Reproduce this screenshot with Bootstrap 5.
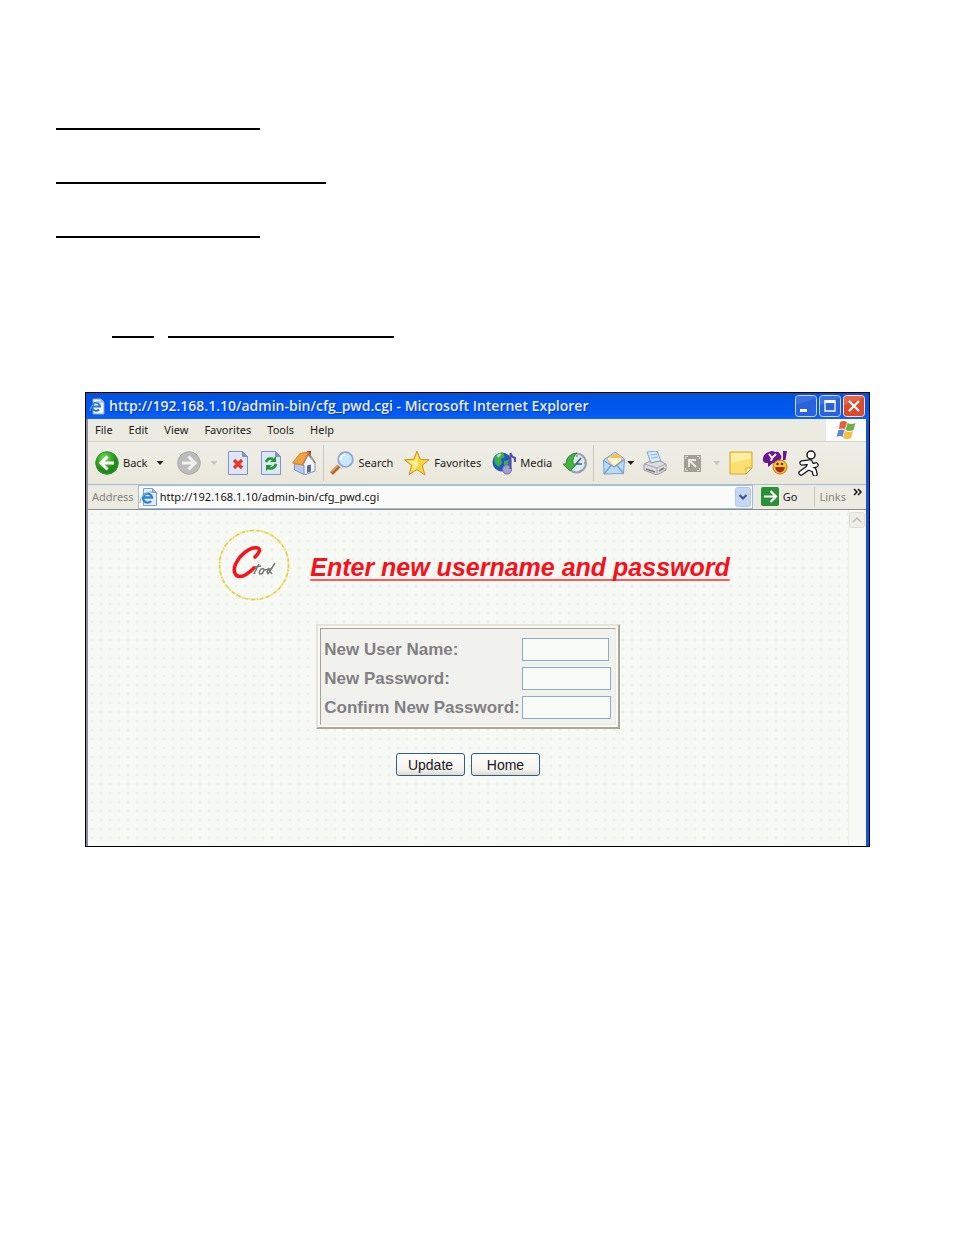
<!DOCTYPE html>
<html lang="en">
<head>
<meta charset="utf-8">
<meta name="viewport" content="width=device-width, initial-scale=1">
<title>cfg_pwd.cgi - Microsoft Internet Explorer</title>
<link href="https://cdn.jsdelivr.net/npm/bootstrap@5.3.0/dist/css/bootstrap.min.css" rel="stylesheet">
<style>
  body { background: #fff; color: #000; font-family: "Liberation Sans", Arial, sans-serif; }
  button { color: inherit; }
  svg { display: block; flex: none; }

  /* ruled lines above the window */
  .rules { padding: 128px 56px 0; }
  .rule { height: 2px; background: #000; border: 0; opacity: 1; margin: 0 0 52px; }
  .rule-a { width: 204px; }
  .rule-b { width: 270px; }
  .rule-row { padding: 46px 56px 54px 112px; gap: 14px; }
  .rule-c { width: 42px; margin: 0; }
  .rule-d { width: 226px; margin: 0; }

  .window { margin: 0 84px 0 85px; border: 1px solid #000; background: #0f50e0; }
  .titlebar { height: 26px; padding: 0 4px 0 3px; gap: 4px; color: #e6edff;
    background: linear-gradient(#0a4fd0, #0056e8 25%, #0058ee 75%, #0a62fa); }
  .caption { font: 600 14px/26px "Open Sans", "Noto Sans", sans-serif; margin: 0; text-shadow: 1px 1px 0 #0a3aa8; }
  .winbtns { gap: 2px; }
  .winbtns button { padding: 0; border: 0; background: none; }
  .chrome { background: #ecebe2; border-left: 2px solid #8a8c9e; margin-right: 3px;
    font: 11px/14px "Noto Sans", sans-serif; color: #1c1c1c; }
  .plain { border: 0; background: none; padding: 0; font: inherit; color: inherit; white-space: nowrap; }

  .menubar { height: 23px; border-bottom: 1px solid #d6d3c6; padding-left: 7px; }
  .menus { gap: 16px; }
  .flagbox { width: 40px; background: #fdfdfd; }

  .toolbar { height: 43px; border-bottom: 1px solid #a9bfd8; background: linear-gradient(#efeee7, #eae8db); }
  .tools { gap: 9px; padding: 0 7px; }
  .tools-wide { gap: 11px; padding: 0 6px; }
  .tools-end { padding-left: 8px; }
  .tool { gap: 4px; }
  .caret { width: 7px; height: 4px; background: #222; clip-path: polygon(0 0, 100% 0, 50% 100%); margin: 0 5px; }
  .caret-near { margin: 0 0 0 -3px; }
  .caret-off { background: #c9c7bd; margin: 0 0 0 5px; }
  .divider { width: 1px; height: 36px; background: #cac8bd; }

  .addressbar { height: 25px; border-bottom: 1px solid #8c8c88; padding: 0 3px 1px 4px; }
  .muted-label { color: #85837b; }
  .addr { height: 24px; border: 1px solid #a3bbd8; background: #fbfcfa; margin-left: 4px; padding: 0 1px 0 0; }
  .addr input { border: 0; background: none; padding: 0 0 0 3px; min-width: 0; font: inherit; color: #111; outline: 0; }
  .links { border-left: 1px solid #cac8bd; margin-left: 17px; padding-left: 4px; height: 20px; gap: 7px; }

  .page { background: #f7f9f4; border-left: 2px solid #8a8c9e; margin-right: 3px; min-height: 336px; }
  .dots { background: radial-gradient(circle at 4px 4px, #eff1ec 1px, transparent 2px) 0 0 / 9px 9px; }
  .scroll { width: 18px; border-left: 1px solid #eff0ea; padding-top: 2px; }
  .heading { gap: 20px; padding: 19px 0 0 12px; }
  .heading h1 { font: italic bold 25px/30px "Liberation Sans", Arial, sans-serif; color: #f8101a; margin: 0; padding-top: 4px;
    text-decoration: underline; text-decoration-thickness: 2px; text-underline-offset: 3px; text-decoration-skip-ink: none; text-decoration-color: #ff5a5e; }
  .entry { border: 2px solid; border-color: #e6e3d6 #aaa79c #aaa79c #e6e3d6; background: #f8f9f4; padding: 2px; margin: 23px 0 24px; }
  .entry-in { border: 1px solid; border-color: #a5a39b #ecebe0 #ecebe0 #a5a39b; background: #f1f2ed; padding: 6px 4px 2px 3px; }
  .entry label { font: bold 17px/29px "Liberation Sans", Arial, sans-serif; color: #817f84; white-space: nowrap; padding-right: 2px; display: block; }
  .entry td { padding: 0; }
  .entry input { display: block; width: 89px; height: 23px; border: 1px solid #8cabd4; background: #f9fbf7; padding: 0 3px; border-radius: 0; }
  .entry input[type=text] { width: 87px; }
  .acts { gap: 6px; }
  .xp-btn { width: 69px; height: 23px; border: 1px solid #2f5c8f; border-radius: 3px; padding: 0;
    background: linear-gradient(#fdfdfb, #f4f3ed 75%, #dcd8cb); font: 14px/20px "Liberation Sans", Arial, sans-serif; color: #1c1426; }
</style>
</head>
<body>
<div class="rules">
  <hr class="rule rule-a">
  <hr class="rule rule-b">
  <hr class="rule rule-a">
</div>
<div class="rule-row d-flex">
  <hr class="rule rule-c">
  <hr class="rule rule-d">
</div>

<main class="window">
  <header class="titlebar d-flex align-items-center">
    <svg width="16" height="17" viewBox="0 0 16 17"><path d="M4 1h8l3 3v12H4z" fill="#f4f6fb" stroke="#8ea2c8"/><path d="M12 1v3h3" fill="#c6d3ea" stroke="#8ea2c8"/><path d="M10 11.500A4 4 0 1 1 11 8.500H4" fill="none" stroke="#2676cf" stroke-width="2"/><path d="M1 13Q0 9 8 4l4 0" fill="none" stroke="#6eaee8"/></svg>
    <p class="caption text-truncate flex-grow-1">http://192.168.1.10/admin-bin/cfg_pwd.cgi - Microsoft Internet Explorer</p>
    <div class="winbtns d-flex">
      <button type="button" aria-label="Minimize"><svg width="22" height="22" viewBox="0 0 22 22"><rect x=".5" y=".5" width="21" height="21" rx="3" fill="#2a62dc" stroke="#c9daff"/><path d="M1 10V3q0-2 2-2h16q2 0 2 2z" fill="#5888ee" opacity=".4"/><path d="M5 15.500h7" stroke="#fff" stroke-width="3"/></svg></button>
      <button type="button" aria-label="Maximize"><svg width="22" height="22" viewBox="0 0 22 22"><rect x=".5" y=".5" width="21" height="21" rx="3" fill="#2a62dc" stroke="#c9daff"/><path d="M1 10V3q0-2 2-2h16q2 0 2 2z" fill="#5888ee" opacity=".4"/><path d="M6 7v9h10V7" fill="none" stroke="#fff" stroke-width="1.300"/><path d="M5.400 6.500h11.200" stroke="#fff" stroke-width="3"/></svg></button>
      <button type="button" aria-label="Close"><svg width="22" height="22" viewBox="0 0 22 22"><rect x=".5" y=".5" width="21" height="21" rx="3" fill="#dc4a28" stroke="#ffd8d0"/><path d="M1 10V3q0-2 2-2h16q2 0 2 2z" fill="#ee8066" opacity=".5"/><path d="M6 6l10 10M16 6L6 16" stroke="#fff" stroke-width="2.300"/></svg></button>
    </div>
  </header>

  <div class="chrome">
    <nav class="menubar d-flex justify-content-between">
      <div class="menus d-flex align-items-center">
        <button type="button" class="plain">File</button>
        <button type="button" class="plain">Edit</button>
        <button type="button" class="plain">View</button>
        <button type="button" class="plain">Favorites</button>
        <button type="button" class="plain">Tools</button>
        <button type="button" class="plain">Help</button>
      </div>
      <div class="flagbox d-flex align-items-center justify-content-center">
        <svg width="22" height="20" viewBox="0 0 22 20"><path d="M5 2q4-2 7 0l-2 7q-3-1-6 0z" fill="#ea5f34"/><path d="M12.500 3q4 2 8 0l-2 7q-4 2-8 0z" fill="#6dae48"/><path d="M3.500 10q3-1 6 0l-2 7q-3-2-6 0z" fill="#5c88d8"/><path d="M10 11q4 2 8 0l-2 7q-4 2-8 0z" fill="#f3bf3c"/></svg>
      </div>
    </nav>

    <div class="toolbar d-flex align-items-center" role="toolbar" aria-label="Standard buttons">
      <div class="tools d-flex align-items-center">
        <button type="button" class="plain tool d-flex align-items-center">
          <svg width="24" height="24" viewBox="0 0 24 24"><defs><radialGradient id="gb" cx=".4" cy=".3"><stop offset="0" stop-color="#8fdc6c"/><stop offset=".6" stop-color="#3dac2c"/><stop offset="1" stop-color="#218a1c"/></radialGradient></defs><circle cx="12" cy="12" r="11.300" fill="url(#gb)" stroke="#36952e"/><path d="M12.500 5.500L6 12l6.500 6.500M6.500 12H19" fill="none" stroke="#fff" stroke-width="3"/></svg>
          <span>Back</span><span class="caret"></span>
        </button>
        <button type="button" class="plain tool d-flex align-items-center" aria-label="Forward">
          <svg width="24" height="24" viewBox="0 0 24 24"><circle cx="12" cy="12" r="11.300" fill="#bcbcba" stroke="#a9a9a7"/><path d="M11.500 5.500L18 12l-6.500 6.500M17.500 12H5" fill="none" stroke="#f2f2ef" stroke-width="3"/></svg>
          <span class="caret caret-off"></span>
        </button>
        <button type="button" class="plain" aria-label="Stop"><svg width="24" height="24" viewBox="0 0 24 24"><path d="M2.500.5h14l5 5v18h-19z" fill="#dce8fa" stroke="#8094c4"/><path d="M16.500.5v5h5z" fill="#7992cc" stroke="#8094c4"/><path d="M8 9l8 8M16 9l-8 8" stroke="#f03420" stroke-width="3.200"/></svg></button>
        <button type="button" class="plain" aria-label="Refresh"><svg width="24" height="24" viewBox="0 0 24 24"><path d="M2.500.5h14l5 5v18h-19z" fill="#dce8fa" stroke="#8094c4"/><path d="M16.500.5v5h5z" fill="#7992cc" stroke="#8094c4"/><path d="M7 11q2-5 7-3M17 13q-2 6-8 4" fill="none" stroke="#1f9a2a" stroke-width="2.600"/><path d="M11 11h6V5zM13 14H7v6z" fill="#1f9a2a"/></svg></button>
        <button type="button" class="plain" aria-label="Home"><svg width="24" height="24" viewBox="0 0 24 24"><path d="M15 0h4v8h-4z" fill="#b34236"/><path d="M11 14l5-10 7 8v8l-11 4z" fill="#f3f7fd" stroke="#7d96bf"/><path d="M2.500 13v6l9.500 4.500V14z" fill="#b6cbea" stroke="#7d96bf"/><path d="M.500 12L8 2.500l8.500-1.500-6 13z" fill="#f4a33c" stroke="#d88126"/><path d="M10.500 14l6-12 7 10" fill="none" stroke="#b9825a" stroke-width="1.200"/><path d="M15 14.500l4-1v7l-4 1.500z" fill="#5c6b9c"/></svg></button>
      </div>
      <div class="divider"></div>
      <div class="tools tools-wide d-flex align-items-center">
        <button type="button" class="plain tool d-flex align-items-center">
          <svg width="24" height="24" viewBox="0 0 24 24"><path d="M1.500 22.500L9 15" stroke="#b7662c" stroke-width="4"/><path d="M1.500 21L8 14.500" stroke="#e8a260" stroke-width="1.500"/><circle cx="15.500" cy="8.500" r="7.300" fill="#c9e8fb" stroke="#8ea5d8" stroke-width="1.800"/><path d="M10.500 9q0-5 5-5.500" fill="none" stroke="#fff" stroke-width="2"/></svg>
          <span>Search</span>
        </button>
        <button type="button" class="plain tool d-flex align-items-center">
          <svg width="26" height="26" viewBox="0 0 26 26"><path d="M13 1l3.200 8.200 9 .6-7 5.600L20.800 25 13 19.600 5 24.600l2.600-9L.800 9.800l9-.6z" fill="#fbd83e" stroke="#c8902c"/><path d="M13 4l-2 7-7 0 6 4-2 6 6-5z" fill="#fdf09a"/></svg>
          <span>Favorites</span>
        </button>
        <button type="button" class="plain tool d-flex align-items-center">
          <svg width="24" height="24" viewBox="0 0 24 24"><circle cx="10" cy="11" r="9.500" fill="#2355bf"/><path d="M2 7q4-6 9-5l2 4-4 2 1 4-3 4-4-3zM12 10l5-1-1 5-4 2z" fill="#3fae4a"/><path d="M5 4q3-2 5-1l-4 4z" fill="#b0e8c0"/><ellipse cx="15" cy="18.500" rx="4.500" ry="4.500" fill="#a3a0d4" stroke="#6e6cb0"/><path d="M18.500 18V2q1 4 4.500 5v4" fill="none" stroke="#5553a0" stroke-width="2"/></svg>
          <span>Media</span>
        </button>
        <button type="button" class="plain" aria-label="History"><svg width="24" height="24" viewBox="0 0 24 24"><circle cx="13.500" cy="12" r="9.500" fill="#d8e9f3" stroke="#91a1af" stroke-width="2"/><path d="M13 13l5-6M13 13h6" stroke="#3c5b86" stroke-width="1.500"/><path d="M17 19l1 1M21 12h1M14 4v2" stroke="#e07848" stroke-width="1.500"/><path d="M0 13h3Q3 4 14 2q-5 4-4 11h4l-7 7z" fill="#47b23f" stroke="#2d8a31"/></svg></button>
      </div>
      <div class="divider"></div>
      <div class="tools tools-end d-flex align-items-center">
        <button type="button" class="plain tool d-flex align-items-center" aria-label="Mail">
          <svg width="24" height="24" viewBox="0 0 24 24"><path d="M1.500 9L13 1l9.500 7-1 14.500L2 23z" fill="#b8dcf8" stroke="#7d9cd2"/><path d="M5 8q6-7 14-3l1 4-8 7z" fill="#fff4cb" stroke="#dfb468"/><path d="M7 7q5-5 11-2l1 2z" fill="#f5bd58"/><path d="M1.500 9.500L12 16l10.500-7.500M2 23l7-8.500M21.500 22.500L15 14.500" fill="none" stroke="#7d9cd2" stroke-width="1.300"/></svg>
          <span class="caret caret-near"></span>
        </button>
        <button type="button" class="plain" aria-label="Print"><svg width="24" height="24" viewBox="0 0 24 24"><path d="M4 1l10-1 4 10-10 2z" fill="#d6e8fc" stroke="#7da4dc"/><path d="M7 4l7-1M8 7l7-1" stroke="#8cb4e8"/><path d="M1 13l6-3 1 2 9-2 6 3v6l-9 5-13-5z" fill="#dcdcde" stroke="#98989e"/><path d="M1 13l13 4 9-4M14 17v6" fill="none" stroke="#a4a4aa"/><path d="M3 18l9 3M16 20l5-3" stroke="#77777e" stroke-width="1.500"/></svg></button>
        <button type="button" class="plain tool d-flex align-items-center ms-1" aria-label="Edit">
          <svg width="24" height="24" viewBox="0 0 24 24"><path d="M4 4h17v17H4z" fill="#a19f96"/><path d="M9 16V9h7M9 9l7 7" fill="none" stroke="#eceadf" stroke-width="2"/><path d="M5.500 8V5.500H8M17 5.500h2.500V8M5.500 17v2.500H8M17 19.500h2.500V17" fill="none" stroke="#dddbd1"/></svg>
          <span class="caret caret-off"></span>
        </button>
        <button type="button" class="plain" aria-label="Note"><svg width="24" height="24" viewBox="0 0 24 24"><path d="M1 1h22v16l-6 6H1z" fill="#fbe070" stroke="#d6a52c"/><path d="M2 2h20v5L2 12z" fill="#fdeea0"/><path d="M17 23v-6h6z" fill="#fff4b8" stroke="#d6a52c"/></svg></button>
        <button type="button" class="plain" aria-label="Messenger"><svg width="26" height="26" viewBox="0 0 26 26"><path d="M7 2q3-2 6 0 4-1 5 2 3 3 0 6l-5 3H5Q0 13 1 8q1-5 6-6z" fill="#6c1592"/><path d="M21 1h4l-1.500 9H21zM6 11l0 6 5-4z" fill="#6c1592"/><path d="M7 4l3 4 4-4M10 8l-1 3" fill="none" stroke="#fff" stroke-width="2"/><circle cx="18" cy="17" r="7" fill="#fcc728" stroke="#c66c1c"/><circle cx="15.500" cy="14" r="1.200" fill="#442010"/><circle cx="20" cy="14" r="1.200" fill="#442010"/><path d="M13.500 17.500h9q-1 4.500-4.500 4.500t-4.500-4.500z" fill="#b3261a" stroke="#5b1c10" stroke-width=".6"/></svg></button>
        <button type="button" class="plain" aria-label="AIM"><svg width="24" height="26" viewBox="0 0 24 26"><g fill="none" stroke-linejoin="round" stroke-linecap="round"><path d="M13 12l-8 1M13 12l2 4 4-1M13 13l-2 5-7 5M12 18l5 2 1 4" stroke="#141414" stroke-width="5.500"/><path d="M13 12l-8 1M13 12l2 4 4-1M13 13l-2 5-7 5M12 18l5 2 1 4" stroke="#fff" stroke-width="3"/></g><circle cx="14" cy="5" r="4" fill="#fff" stroke="#141414" stroke-width="1.500"/></svg></button>
      </div>
    </div>

    <div class="addressbar d-flex align-items-center">
      <label for="addr" class="muted-label">Address</label>
      <div class="addr d-flex align-items-center flex-grow-1">
        <svg width="18" height="18" viewBox="0 0 18 18"><path d="M4.500.5h9l4 4v13h-13z" fill="#e3edfb" stroke="#879cc8"/><path d="M13.500.5v4h4" fill="#9fb4dc" stroke="#879cc8"/><path d="M12 13A4.500 4.500 0 1 1 13 9.500H5" fill="none" stroke="#2c84d8" stroke-width="2.400"/><path d="M1 15Q0 9 10 4l3 0" fill="none" stroke="#6eaee8"/></svg>
        <input id="addr" class="flex-grow-1" type="text" value="http://192.168.1.10/admin-bin/cfg_pwd.cgi">
        <button type="button" class="plain" aria-label="Show addresses"><svg width="16" height="20" viewBox="0 0 16 20"><rect x=".5" y=".5" width="15" height="19" rx="2" fill="#c6d6f6" stroke="#b4c7ee"/><path d="M4.500 8L8 11.500 11.500 8" fill="none" stroke="#46577e" stroke-width="2.200"/></svg></button>
      </div>
      <button type="button" class="plain d-flex align-items-center tool ms-2">
        <svg width="18" height="19" viewBox="0 0 18 19"><rect width="18" height="19" rx="2" fill="#2a9136"/><path d="M9.500 4l5.500 5.500L9.500 15M14 9.500H3" fill="none" stroke="#fff" stroke-width="2.200"/></svg>
        <span>Go</span>
      </button>
      <div class="links d-flex align-items-center"><span class="muted-label">Links</span>
        <button type="button" class="plain align-self-start" aria-label="More links"><svg width="10" height="10" viewBox="0 0 10 10"><path d="M1 2l3 3-3 3M5 2l3 3-3 3" fill="none" stroke="#111" stroke-width="1.500"/></svg></button>
      </div>
    </div>
  </div>

  <div class="page d-flex">
    <div class="dots flex-grow-1 d-flex flex-column align-items-center">
      <div class="heading d-flex align-items-center">
        <svg width="72" height="72" viewBox="0 0 72 72"><circle cx="36" cy="36" r="34.500" fill="none" stroke="#f0e8a0" stroke-width="2"/><circle cx="36" cy="36" r="34.500" fill="none" stroke="#dfcf50" stroke-width="1.500" stroke-dasharray="3 2 1 2 4 3"/><path d="M37 28q7-7 3-9-8-2-18 9-9 12-4 18 6 5 18-7" fill="none" stroke="#f5141c" stroke-width="3.600" stroke-linecap="round"/><path d="M41 35l-5 10M37 38l6-1M43 40q-3 4-1 5 3 0 4-4 0-2-3-1M46 41q4 0 5-2-3 4-1 6M57 34l-7 11M55 38l-4 3 3 4" fill="none" stroke="#777" stroke-width="1.400"/></svg>
        <h1>Enter new username and password</h1>
      </div>
      <form class="d-flex flex-column align-items-center">
        <div class="entry"><div class="entry-in">
          <table>
            <tr><td><label for="user">New User Name:</label></td><td><input id="user" type="text"></td></tr>
            <tr><td><label for="pass">New Password:</label></td><td><input id="pass" type="password"></td></tr>
            <tr><td><label for="conf">Confirm New Password:</label></td><td><input id="conf" type="password"></td></tr>
          </table>
        </div></div>
        <div class="acts d-flex">
          <button type="button" class="xp-btn">Update</button>
          <button type="button" class="xp-btn">Home</button>
        </div>
      </form>
    </div>
    <div class="scroll">
      <svg width="16" height="16" viewBox="0 0 16 16"><rect x=".5" y=".5" width="15" height="15" rx="2" fill="#eeede8" stroke="#dddcd5"/><path d="M4 10l4-4 4 4" fill="none" stroke="#bdbcb5" stroke-width="1.500"/></svg>
    </div>
  </div>
</main>
<script src="https://cdn.jsdelivr.net/npm/bootstrap@5.3.0/dist/js/bootstrap.bundle.min.js"></script>
</body>
</html>
